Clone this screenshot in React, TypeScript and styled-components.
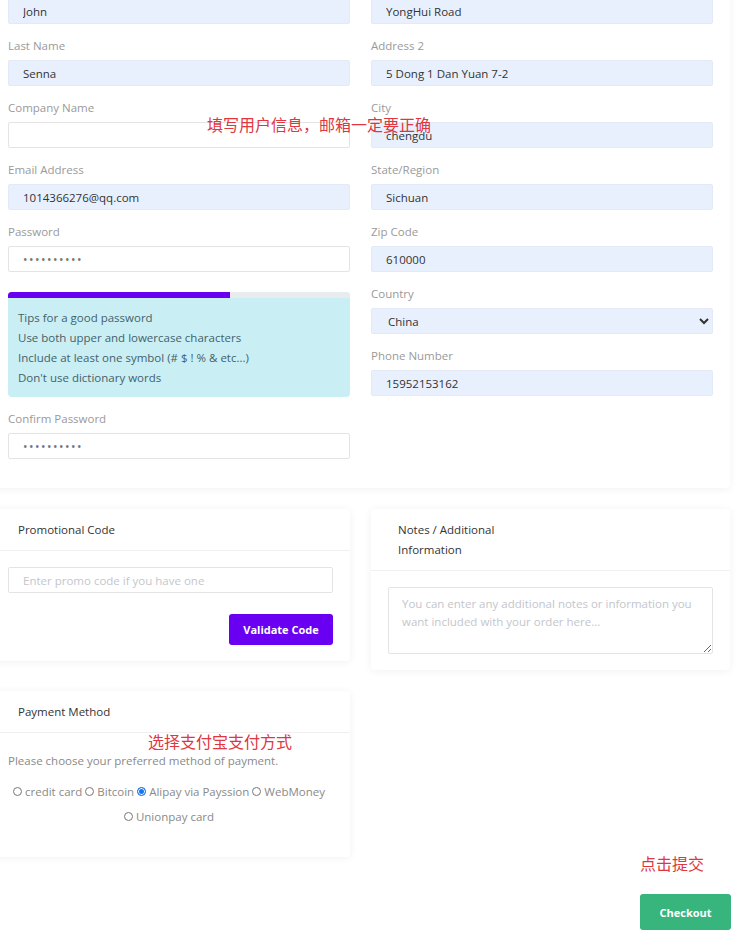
import React from 'react';
import styled, { createGlobalStyle } from 'styled-components';

const GlobalStyle = createGlobalStyle`
  html, body {
    margin: 0;
    padding: 0;
    background: #fff;
    overflow: hidden;
  }
  body {
    font-family: "Open Sans", "Noto Sans", "Noto Sans CJK SC", sans-serif;
    font-size: 11.5px;
    color: #333;
  }
`;

const Page = styled.div`
  width: 739px;
  margin: -41px 0 0 -9px;
  display: flex;
  flex-direction: column;
  gap: 21px;
`;

const Card = styled.section`
  position: relative;
  background: #fff;
  border-radius: 4px;
  box-shadow: 0 1px 8px rgba(0, 0, 0, 0.06);
`;

const FormCard = styled(Card)`
  padding: 17px 17px 15px;
  display: grid;
  grid-template-columns: 1fr 1fr;
  column-gap: 21px;
  align-items: start;
`;

const Column = styled.div`
  display: flex;
  flex-direction: column;
`;

const Group = styled.div`
  display: flex;
  flex-direction: column;
  margin-bottom: 14px;
`;

const Label = styled.label`
  color: #9a9a9a;
  line-height: 16px;
  margin-bottom: 6px;
`;

const Input = styled.input<{ $filled?: boolean; $secret?: boolean }>`
  box-sizing: border-box;
  height: 26px;
  width: 100%;
  padding: 0 14px;
  font: inherit;
  font-size: ${p => (p.$secret ? '12px' : '11.5px')};
  letter-spacing: ${p => (p.$secret ? '1.5px' : 'normal')};
  color: ${p => (p.$secret ? '#777' : '#333')};
  border: 1px solid ${p => (p.$filled ? '#e3eaf5' : '#e4e4e4')};
  border-radius: 2px;
  background: ${p => (p.$filled ? '#e8f0fe' : '#fff')};
  outline: none;
  &::placeholder {
    color: #c3c6cc;
  }
`;

const Select = styled.select`
  box-sizing: border-box;
  height: 26px;
  width: 100%;
  padding: 0 12px;
  font: inherit;
  color: #333;
  border: 1px solid #e3eaf5;
  border-radius: 2px;
  background: #e8f0fe;
  outline: none;
`;

const Strength = styled.div`
  margin-top: 6px;
  margin-bottom: 14px;
  display: flex;
  flex-direction: column;
`;

const Track = styled.div`
  height: 6px;
  background: #e9ecef;
  border-radius: 3px 3px 0 0;
  overflow: hidden;
`;

const Fill = styled.div`
  height: 100%;
  background: #6a00f2;
  border-radius: 3px 0 0 0;
`;

const Tips = styled.ul`
  list-style: none;
  margin: 0;
  padding: 10px 10px 9px;
  background: #c9eff5;
  color: #44616a;
  border-radius: 0 0 4px 4px;
  li {
    line-height: 20px;
  }
`;

const Annotation = styled.div`
  color: #e0363f;
  font-size: 16px;
  line-height: 20px;
  font-family: "Noto Sans CJK SC", sans-serif;
  white-space: nowrap;
`;

const Overlay = styled(Annotation)<{ $x: number; $y: number }>`
  position: absolute;
  left: ${p => p.$x}px;
  top: ${p => p.$y}px;
`;

const Row = styled.div`
  display: grid;
  grid-template-columns: 1fr 1fr;
  column-gap: 21px;
  align-items: start;
`;

const CardHeader = styled.header`
  padding: 11px 27px 10px;
  border-bottom: 1px solid #f0f0f0;
`;

const CardTitle = styled.h3<{ $narrow?: boolean }>`
  margin: 0;
  font-size: 11.5px;
  font-weight: 400;
  line-height: 20px;
  color: #333;
  max-width: ${p => (p.$narrow ? '115px' : 'none')};
`;

const CardBody = styled.div`
  position: relative;
  padding: 16px 17px 16px;
  display: flex;
  flex-direction: column;
`;

const Actions = styled.div`
  display: flex;
  justify-content: flex-end;
  margin-top: 21px;
`;

const Button = styled.button<{ $tone: 'purple' | 'green' }>`
  border: none;
  border-radius: 3px;
  color: #fff;
  font: inherit;
  font-size: 11px;
  font-weight: 700;
  cursor: pointer;
  background: ${p => (p.$tone === 'purple' ? '#6a00f2' : '#37b57d')};
  height: ${p => (p.$tone === 'purple' ? '31px' : '36px')};
  width: ${p => (p.$tone === 'purple' ? '104px' : '91px')};
`;

const TextArea = styled.textarea`
  box-sizing: border-box;
  height: 67px;
  width: 100%;
  padding: 7px 13px;
  font: inherit;
  line-height: 18px;
  border: 1px solid #e4e4e4;
  border-radius: 2px;
  outline: none;
  &::placeholder {
    color: #c3c6cc;
  }
`;

const Hint = styled.p`
  margin: 2px 0 8px;
  color: #8a8a8a;
  line-height: 20px;
`;

const Radios = styled.div`
  text-align: center;
  line-height: 25px;
  padding: 0 0 12px;
  color: #8a8a8a;
`;

const RadioItem = styled.label`
  display: inline-flex;
  align-items: center;
  gap: 3px;
  margin-right: 3px;
  white-space: nowrap;
`;

const Dot = styled.span<{ $checked?: boolean }>`
  box-sizing: border-box;
  width: 9px;
  height: 9px;
  border-radius: 50%;
  border: 1px solid ${p => (p.$checked ? '#1a73e8' : '#777')};
  background: ${p => (p.$checked ? '#1a73e8' : '#fff')};
  box-shadow: ${p => (p.$checked ? 'inset 0 0 0 1px #fff' : 'none')};
`;

const Footer = styled.div`
  display: flex;
  justify-content: flex-end;
  margin-top: -25px;
  margin-right: -1px;
`;

const FooterStack = styled.div`
  display: flex;
  flex-direction: column;
  align-items: flex-start;
  gap: 21px;
  margin-left: -2px;
`;

type Field = { label: string; value?: string; type?: string; filled?: boolean };

const left: Field[] = [
  { label: 'First Name', value: 'John', filled: true },
  { label: 'Last Name', value: 'Senna', filled: true },
  { label: 'Company Name', value: '' },
  { label: 'Email Address', value: '1014366276@qq.com', filled: true },
  { label: 'Password', value: '1234567890', type: 'password' },
];

const right: Field[] = [
  { label: 'Address 1', value: 'YongHui Road', filled: true },
  { label: 'Address 2', value: '5 Dong 1 Dan Yuan 7-2', filled: true },
  { label: 'City', value: 'chengdu', filled: true },
  { label: 'State/Region', value: 'Sichuan', filled: true },
  { label: 'Zip Code', value: '610000', filled: true },
];

const payments = ['credit card', 'Bitcoin', 'Alipay via Payssion', 'WebMoney', 'Unionpay card'];

const FieldGroup = ({ f }: { f: Field }) => (
  <Group>
    <Label>{f.label}</Label>
    <Input
      type={f.type || 'text'}
      defaultValue={f.value}
      $filled={f.filled}
      $secret={f.type === 'password'}
    />
  </Group>
);

export default function App() {
  return (
    <>
      <GlobalStyle />
      <Page>
        <FormCard>
          <Column>
            {left.map(f => (
              <FieldGroup key={f.label} f={f} />
            ))}
            <Strength>
              <Track>
                <Fill style={{ width: '65%' }} />
              </Track>
              <Tips>
                <li>Tips for a good password</li>
                <li>Use both upper and lowercase characters</li>
                <li>Include at least one symbol (# $ ! % &amp; etc...)</li>
                <li>Don't use dictionary words</li>
              </Tips>
            </Strength>
            <FieldGroup f={{ label: 'Confirm Password', value: '1234567890', type: 'password' }} />
          </Column>
          <Column>
            {right.map(f => (
              <FieldGroup key={f.label} f={f} />
            ))}
            <Group>
              <Label>Country</Label>
              <Select defaultValue="China">
                <option>China</option>
              </Select>
            </Group>
            <FieldGroup f={{ label: 'Phone Number', value: '15952153162', filled: true }} />
          </Column>
          <Overlay $x={216} $y={155}>填写用户信息，邮箱一定要正确</Overlay>
        </FormCard>

        <Row>
          <Card>
            <CardHeader>
              <CardTitle>Promotional Code</CardTitle>
            </CardHeader>
            <CardBody>
              <Input placeholder="Enter promo code if you have one" />
              <Actions>
                <Button $tone="purple">Validate Code</Button>
              </Actions>
            </CardBody>
          </Card>
          <Card>
            <CardHeader>
              <CardTitle $narrow>Notes / Additional Information</CardTitle>
            </CardHeader>
            <CardBody>
              <TextArea placeholder="You can enter any additional notes or information you want included with your order here..." />
            </CardBody>
          </Card>
        </Row>

        <Row>
          <Card>
            <CardHeader>
              <CardTitle>Payment Method</CardTitle>
            </CardHeader>
            <CardBody>
              <Hint>Please choose your preferred method of payment.</Hint>
              <Radios>
                {payments.map(p => (
                  <RadioItem key={p}>
                    <Dot $checked={p === 'Alipay via Payssion'} />
                    {p}
                  </RadioItem>
                ))}
              </Radios>
              <Overlay $x={157} $y={-2}>选择支付宝支付方式</Overlay>
            </CardBody>
          </Card>
        </Row>

        <Footer>
          <FooterStack>
            <Annotation>点击提交</Annotation>
            <Button $tone="green">Checkout</Button>
          </FooterStack>
        </Footer>
      </Page>
    </>
  );
}
